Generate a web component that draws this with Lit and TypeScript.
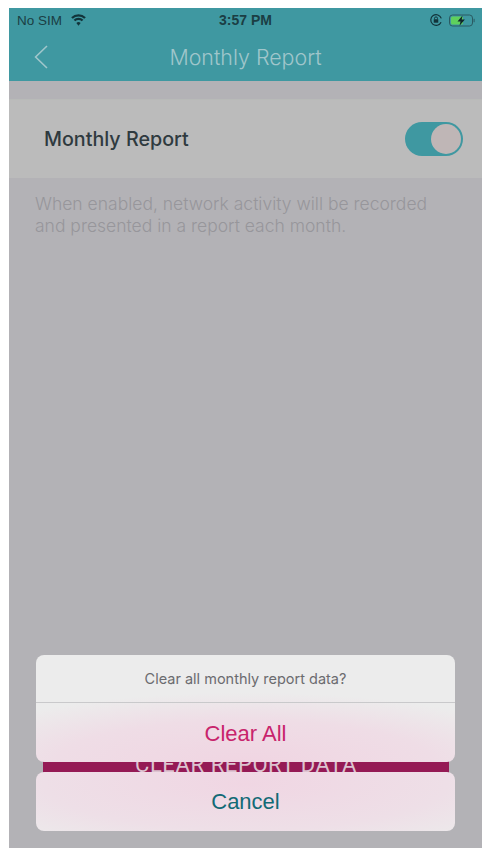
import { LitElement, html, css } from "lit";
import { customElement } from "lit/decorators.js";

@customElement("app-root")
export class AppRoot extends LitElement {
  static styles = css`
    :host { display: block; width: 482px; height: 854px; background: #fff; font-family: Inter, "Liberation Sans", sans-serif; }
    .frame { box-sizing: border-box; width: 482px; height: 854px; padding: 8px 0 6px 9px; }
    .screen { position: relative; height: 100%; overflow: hidden; background: #b3b2b6; display: flex; flex-direction: column; }
    .header { background: #3f98a1; height: 73px; flex: none; display: flex; flex-direction: column; }
    .status { height: 24px; padding: 0 7px 0 8px; display: flex; align-items: center; font: 13.5px "Liberation Sans", sans-serif; color: #1b3e44; position: relative; }
    .status .left { display: flex; align-items: center; gap: 9px; }
    .time { position: absolute; left: 0; right: 0; text-align: center; font-weight: 700; font-size: 14px; }
    .status .right { display: flex; align-items: center; gap: 6px; margin-left: auto; }
    .nav { flex: 1; display: flex; align-items: center; position: relative; }
    .back { margin-left: 25px; }
    .title { position: absolute; left: 0; right: 0; text-align: center; font: 300 21.4px Inter, sans-serif; color: #a0c6cb; }
    .row { margin-top: 18px; height: 79px; flex: none; background: #bbbbbb; border-top: 1px solid #b8bab8; box-sizing: border-box; display: flex; align-items: center; justify-content: space-between; padding: 0 19px 0 35px; }
    .row .label { font: 500 19.7px Inter, sans-serif; color: #2f3a3f; }
    .toggle { width: 58px; height: 34px; border-radius: 17px; background: #3f98a1; position: relative; flex: none; }
    .knob { position: absolute; right: 2px; top: 2px; width: 30px; height: 30px; border-radius: 50%; background: #bfb6b6; }
    .desc { margin: 15px 0 0 26px; width: 410px; font: 300 17.5px/22px Inter, sans-serif; color: #97969b; }
    .action { margin: auto 33px 58px 34px; height: 48px; flex: none; background: #951a55; color: #dcc3d0; font: 400 22px/45px Roboto, sans-serif; text-align: center; letter-spacing: 0.6px; }
    .overlay { position: absolute; inset: 0; display: flex; flex-direction: column; justify-content: flex-end; gap: 10px; padding: 0 27px 17px; }
    .sheet { border-radius: 8px; overflow: hidden; background-color: #ececec; font-family: "Liberation Sans", sans-serif; }
    .sheet.top { background-image: radial-gradient(ellipse 75% 65% at 50% 100%, #f0d5e2 0%, #efdde6 60%, rgba(236,236,236,0) 100%); }
    .sheet.bottom { background-image: radial-gradient(ellipse 80% 130% at 50% 20%, #f0d6e3 0%, #eedfe7 60%, rgba(236,236,236,0) 100%); }
    .msg { height: 48px; display: flex; align-items: center; justify-content: center; font: 400 14.5px Inter, sans-serif; color: #6b6b6f; border-bottom: 1px solid #c9c9cb; box-sizing: border-box; }
    .btn { display: flex; align-items: center; justify-content: center; font-size: 22px; box-sizing: border-box; }
    .clear { height: 59px; padding-top: 2px; color: #c8246c; }
    .cancel { height: 59px; color: #126a76; }
  `;

  render() {
    return html`<div class="frame"><div class="screen">
      <div class="header">
        <div class="status">
          <div class="left"><span>No SIM</span>
            <svg width="15" height="12" viewBox="0 0 14 11" fill="none" stroke="#12333a" stroke-width="2.1">
              <path d="M.9 3.7a8.6 8.6 0 0 1 12.2 0"/><path d="M3.2 6a5.3 5.3 0 0 1 7.6 0"/><path d="M7 10.8 5 8.2a3 3 0 0 1 4 0z" fill="#12333a" stroke="none"/>
            </svg>
          </div>
          <div class="time">3:57 PM</div>
          <div class="right">
            <svg width="14" height="14" viewBox="0 0 13 13" fill="none" stroke="#12333a" stroke-width="1.1">
              <path d="M11.2 8.6A5 5 0 1 1 11.4 5"/><rect x="4.4" y="5.8" width="4.2" height="3.2" fill="#12333a" stroke="none"/><path d="M5.1 5.8V5a1.4 1.4 0 0 1 2.8 0v.8" stroke-width=".9"/>
            </svg>
            <svg width="26" height="13" viewBox="0 0 26 13" fill="none">
              <rect x=".5" y="1" width="23" height="11" rx="3" stroke="#2a5a62" stroke-width="1"/>
              <rect x="2" y="2.5" width="12" height="8" rx="1.5" fill="#5fd05c"/>
              <path d="M13.5 1.5 8.5 7.4h3l-1 4.4 5.4-6.3h-3.2z" fill="#10262b"/>
              <rect x="24.6" y="4.8" width="1" height="3.4" fill="#2a5a62"/>
            </svg>
          </div>
        </div>
        <div class="nav">
          <svg class="back" width="14" height="24" viewBox="0 0 14 24" fill="none" stroke="#a0c6cb" stroke-width="1.6"><path d="M13 1 1.6 12 13 23"/></svg>
          <div class="title">Monthly Report</div>
        </div>
      </div>
      <div class="row">
        <span class="label">Monthly Report</span>
        <div class="toggle"><div class="knob"></div></div>
      </div>
      <div class="desc">When enabled, network activity will be recorded and presented in a report each month.</div>
      <div class="action">CLEAR REPORT DATA</div>
      <div class="overlay">
        <div class="sheet top">
          <div class="msg">Clear all monthly report data?</div>
          <div class="btn clear">Clear All</div>
        </div>
        <div class="sheet bottom">
          <div class="btn cancel">Cancel</div>
        </div>
      </div>
    </div></div>`;
  }
}
